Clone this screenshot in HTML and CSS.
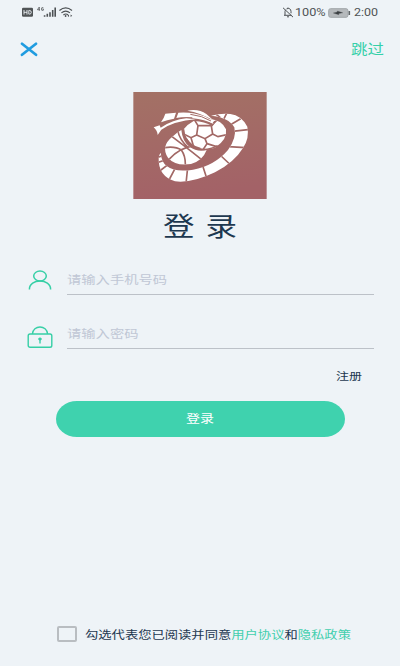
FILE: index.html
```html
<!DOCTYPE html>
<html lang="zh-CN">
<head>
<meta charset="utf-8">
<title>登录</title>
<link rel="stylesheet" href="styles.css">
</head>
<body>
<div class="screen">
  <header class="status">
    <svg class="status-left" width="52" height="14" viewBox="0 0 52 14">
      <rect x="0" y="2.8" width="11" height="9" rx="1.3" fill="#505456"/>
      <path d="M2 5v4.6M5 5v4.6M2 7.3h3M6.8 5.5v3.6h1q1.5-.2 1.5-1.8T7.8 5.5z" fill="none" stroke="#eef3f7" stroke-width=".9"/>
      <path d="M17.3 5.8V2L15.4 4.7h2.6M21.4 2.8q-2-1-2 1.2t2 1.2V4h-.9" fill="none" stroke="#64686b" stroke-width=".9"/>
      <path d="M22.6 10.2v1.6M25.3 8.7v3.1M28 7.2v4.6M30.7 5v6.8M33.2 2.5v9.3" stroke="#4d5154" stroke-width="1.6"/>
      <path d="M37.4 5.5q6.3-5.2 12.6 0M39.4 7.9q4.3-3.4 8.6 0M41.4 10q2.4-1.9 4.6-.2" fill="none" stroke="#4d5154" stroke-width="1.2"/>
      <circle cx="43.6" cy="11" r=".9" fill="#4d5154"/>
      <path d="M45.4 10.7l1.6-1.2v2.4zM50.2 10.7l-1.6-1.2v2.4z" fill="#4d5154"/>
    </svg>
    <div class="status-right">
      <svg class="bell" width="12" height="12" viewBox="0 0 12 12" fill="none" stroke="#4d5154" stroke-width="1">
        <path d="M2 8.3h7.5M3 8V4.5q.1-1 .8-1.8M4.6 1.8Q8.8 .5 9 4.5v1.8M5 9.8h2M6 .5v1M1 .8l10 9.3"/>
      </svg>
      <span class="percent">100%</span>
      <svg class="battery" width="23" height="10" viewBox="0 0 23 10">
        <rect x=".7" y=".7" width="19.2" height="8.6" rx="1.8" fill="#b5b9bc" stroke="#a0a5a8"/>
        <path d="M21.3 3v4" stroke="#62676a" stroke-width="1.6"/>
        <path d="M5.3 5l4-.9V3l5.5 1.8-4 .8v1.2z" fill="#393e41" stroke="#4d5154" stroke-width=".3"/>
      </svg>
      <span class="clock">2:00</span>
    </div>
  </header>

  <nav class="nav">
    <svg class="close" width="18" height="15" viewBox="0 0 18 15">
      <path d="M2 1.8L16 12.8M16 1.8L2 12.8" fill="none" stroke="#209ce0" stroke-width="2.7" stroke-linecap="round"/>
    </svg>
    <a class="skip wide">跳过</a>
  </nav>

  <main class="main">
    <svg class="logo" width="134" height="107" viewBox="24 20 402 321" preserveAspectRatio="none">
      <defs>
        <linearGradient id="clay" x1="0" y1="0" x2=".15" y2="1">
          <stop offset="0" stop-color="#a37165"/>
          <stop offset="1" stop-color="#a36267"/>
        </linearGradient>
        <clipPath id="soccer"><path d="M176 132Q206 94 248 100Q290 102 303 132Q308 163 270 187Q232 200 202 178Q178 157 176 132Z"/></clipPath>
        <clipPath id="basket"><path d="M169 134Q172 168 194 185Q217 201 245 194Q233 226 198 236Q151 243 129 217Q106 183 142 154Q154 143 169 134Z"/></clipPath>
        <clipPath id="ring"><path d="M258 91Q288 83 316 86Q349 90 367 124Q374 158 354 188Q328 231 270 261Q202 294 150 288Q99 272 101 218Q102 208 107 202Q109 229 125 242Q151 262 204 253Q269 241 309 194Q336 157 328 126Q311 96 258 91Z"/></clipPath>
      </defs>
      <rect x="25" y="20" width="400" height="321" fill="url(#clay)"/>
      <g fill="#fff">
        <path d="M258 91Q288 83 316 86Q349 90 367 124Q374 158 354 188Q328 231 270 261Q202 294 150 288Q99 272 101 218Q102 208 107 202Q109 229 125 242Q151 262 204 253Q269 241 309 194Q336 157 328 126Q311 96 258 91Z"/>
        <path d="M169 134Q172 168 194 185Q217 201 245 194Q233 226 198 236Q151 243 129 217Q106 183 142 154Q154 143 169 134Z"/>
        <path d="M176 132Q206 94 248 100Q290 102 303 132Q308 163 270 187Q232 200 202 178Q178 157 176 132Z"/>
        <path d="M121 85L153 82L147 100Q126 104 108 111Q117 98 121 85Z"/>
        <path d="M160 82Q203 79 238 93Q261 103 267 117Q242 99 211 97Q182 94 154 98Z"/>
        <path d="M187 76Q222 70 244 86L265 105Q225 82 187 76Z"/>
      </g>
      <g clip-path="url(#ring)" fill="none" stroke="#a26865" stroke-width="5">
        <path d="M270 84l16 13M306 82l-9 18M347 100l-33 20M375 132l-53 6M361 187l-51-3M317 239l-35-33M246 281l-14-43M183 295l5-49M132 284l20-38M104 257l29-22M96 232l25-8M97 217l18-7"/>
      </g>
      <g clip-path="url(#basket)" fill="none" stroke="#a26865" stroke-width="5">
        <path d="M137 151Q176 180 229 222M118 187Q151 182 169 194Q182 212 181 241M132 222Q165 186 210 181M158 135Q164 164 189 186"/>
      </g>
      <g clip-path="url(#soccer)" fill="none" stroke="#a26865" stroke-width="5">
        <path d="M206 100L219 121L215 149L240 160L263 146L259 122L270 108M219 121L262 121M215 149L198 157L176 146M198 157L207 188M240 160L246 175L232 196M246 175L282 186M263 146L279 154L306 148M259 122L276 104"/>
      </g>
      <path d="M176 132Q177 169 208 186Q240 201 278 181" fill="none" stroke="#a26865" stroke-width="4"/>
      <path d="M183 160Q197 184 226 190" fill="none" stroke="#a26865" stroke-width="6"/>
      <path d="M154 98Q182 94 211 97Q245 100 267 117L262 123Q238 108 208 107Q176 106 154 112Z" fill="#a26b66"/>
      <path d="M86 126L104 120L107 127Q144 103 184 99L212 102Q148 107 109 133L98 149Q97 136 86 126Z" fill="#fff"/>
      <path d="M202 94Q244 91 267 117Q239 102 202 99Z" fill="#fff"/>
      <path d="M196 87Q232 91 258 107" fill="none" stroke="#a26b66" stroke-width="3"/>
    </svg>
    <h1 class="title wide">登 录</h1>

    <form class="form">
      <div class="row">
        <svg class="icon" width="26" height="24" viewBox="0 0 26 24" fill="none" stroke="#36cfa6" stroke-width="1.5">
          <ellipse cx="13" cy="8" rx="6.3" ry="5"/>
          <path d="M2.4 21.4C2.2 10.3 23.8 10.3 23.6 21.4"/>
        </svg>
        <div class="field"><span class="wide">请输入手机号码</span></div>
      </div>
      <div class="row">
        <svg class="icon lock" width="26" height="24" viewBox="0 0 26 24" fill="none" stroke="#36cfa6" stroke-width="1.4">
          <rect x="1.2" y="9" width="23.6" height="13.2" rx="1.8"/>
          <path d="M5.4 9C6 -.3 20 -.3 20.6 9"/>
          <ellipse cx="13" cy="14" rx="1.4" ry="1" fill="#36cfa6" stroke-width="1"/>
          <path d="M13 14v4.5"/>
        </svg>
        <div class="field"><span class="wide">请输入密码</span></div>
      </div>
    </form>
    <a class="register wide">注册</a>
    <div class="submit"><span class="wide">登录</span></div>
  </main>

  <footer class="agree">
    <span class="check"></span>
    <span class="terms wide">勾选代表您已阅读并同意<a>用户协议</a>和<a>隐私政策</a></span>
  </footer>
</div>
</body>
</html>
```
FILE: styles.css
```css
* { box-sizing: border-box; }

body {
  margin: 0;
  background: #eef3f7;
  font-family: Roboto, "Noto Sans CJK SC", sans-serif;
  color: #1d3850;
}

.screen {
  display: flex;
  flex-direction: column;
  width: 400px;
  height: 666px;
}

/* Glyphs are wider than they are tall throughout this screen. */
.wide {
  display: inline-block;
  transform: scaleY(.82);
  white-space: nowrap;
}

.status {
  display: flex;
  justify-content: space-between;
  height: 24px;
  padding: 5px 22px 0 22px;
}

.status-right {
  display: flex;
  align-items: center;
  height: 15px;
  font-size: 13px;
  line-height: 15px;
  color: #505456;
}

.percent {
  width: 31px;
  margin-left: 1px;
  transform: scaleY(.88);
  font-size: 12.7px;
}

.battery { margin-left: 2px; }

.clock {
  margin-left: 3px;
  transform: scaleY(.88);
  font-size: 12.5px;
}

.nav {
  display: flex;
  align-items: center;
  justify-content: space-between;
  height: 50px;
  padding: 0 16px 0 20px;
}

.skip {
  margin-top: 2px;
  font-size: 16.5px;
  line-height: 24px;
  color: #36d0a9;
}

.main {
  display: flex;
  flex-direction: column;
  align-items: center;
}

.logo { margin-top: 18px; }

.title {
  margin: 5px 0 0;
  font-size: 31.5px;
  font-weight: 400;
  line-height: 48px;
  word-spacing: 3px;
}

.form {
  width: 100%;
  margin-top: 16px;
  padding: 0 26px 0 27px;
}

.row {
  display: flex;
  align-items: flex-start;
  gap: 14px;
  height: 54px;
}

.lock { margin-top: 3px; }

.field {
  flex: 1;
  height: 27px;
  border-bottom: 1px solid #bcc1c8;
  font-size: 14.3px;
  line-height: 24px;
  color: #c0c7d5;
}

.register {
  align-self: flex-end;
  margin: -9px 38px 0 0;
  font-size: 13px;
  line-height: 20px;
}

.submit {
  width: 289px;
  height: 36px;
  margin-top: 14px;
  border-radius: 21px / 18px;
  background: #3fd2ae;
  font-size: 14px;
  line-height: 37px;
  text-align: center;
  color: #fff;
}

.agree {
  display: flex;
  align-items: center;
  height: 24px;
  margin: auto 0 20px;
  padding-left: 57px;
}

.check {
  width: 20px;
  height: 16px;
  margin-right: 8px;
  border: 2px solid #b9bdc1;
  border-radius: 2px;
}

.terms {
  margin-top: 3px;
  font-size: 13.3px;
  line-height: 20px;
}

.terms a { color: #43cfae; }
```
